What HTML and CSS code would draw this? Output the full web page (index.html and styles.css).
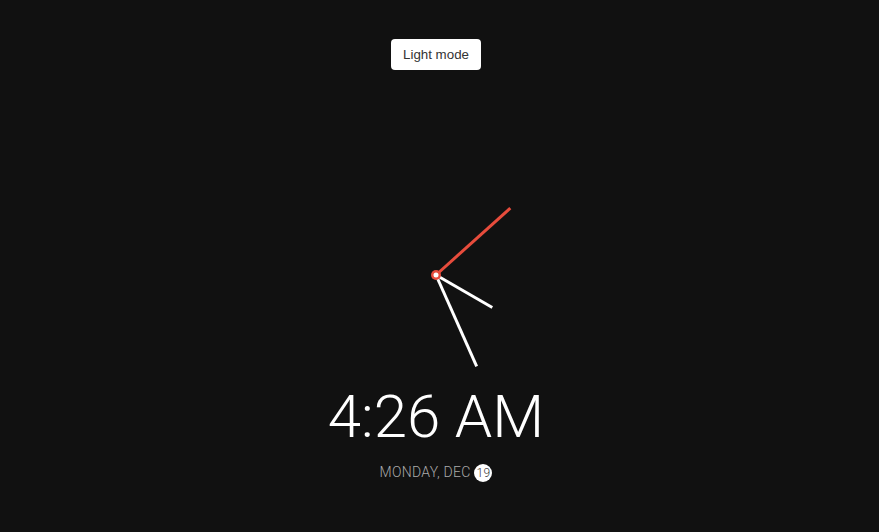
FILE: index.html
```html
<!DOCTYPE html>
<html lang="en" class="dark">
<head>
<meta charset="utf-8">
<title>Clock</title>
<link rel="stylesheet" href="styles.css">
</head>
<body>
<button class="toggle">Light mode</button>
<div class="clock-container">
  <div class="clock">
    <div class="needle hour"></div>
    <div class="needle minute"></div>
    <div class="needle second"></div>
    <div class="center-point"></div>
  </div>
  <div class="time">4:26 AM</div>
  <div class="date">Monday, Dec <span class="circle">19</span></div>
</div>
</body>
</html>
```
FILE: styles.css
```css
html {
  background-color: #111;
  color: #fff;
}
body {
  margin: 0;
  height: 532px;
  overflow: hidden;
  display: flex;
  flex-direction: column;
  align-items: center;
  padding: 39px 7px 0 0;
  box-sizing: border-box;
  font-family: Roboto, "Liberation Sans", sans-serif;
  font-weight: 300;
}
.toggle {
  background-color: #fff;
  color: #333;
  border: 0;
  border-radius: 4px;
  padding: 8px 12px;
  font-family: "Liberation Sans", Arial, sans-serif;
  font-weight: 400;
  font-size: 13.333px;
  line-height: 15px;
  cursor: pointer;
}
.clock-container {
  margin-top: 105px;
  display: flex;
  flex-direction: column;
  align-items: center;
}
.clock {
  position: relative;
  width: 200px;
  height: 200px;
}
.needle {
  background-color: #fff;
  position: absolute;
  top: 50%;
  left: 50%;
  width: 3px;
  height: 65px;
  transform-origin: bottom center;
}
.needle.hour {
  transform: translate(-50%, -100%) rotate(120deg);
}
.needle.minute {
  height: 100px;
  transform: translate(-50%, -100%) rotate(156deg);
}
.needle.second {
  height: 100px;
  background-color: #e74c3c;
  transform: translate(-50%, -100%) rotate(48deg);
}
.center-point {
  position: absolute;
  top: 50%;
  left: 50%;
  width: 10px;
  height: 10px;
  border-radius: 50%;
  background-color: #e74c3c;
  transform: translate(-50%, -50%);
}
.center-point::after {
  content: "";
  position: absolute;
  top: 50%;
  left: 50%;
  width: 5px;
  height: 5px;
  border-radius: 50%;
  background-color: #fff;
  transform: translate(-50%, -50%);
}
.time {
  margin-top: 7px;
  font-size: 60px;
  font-weight: 300;
  line-height: 70px;
}
.date {
  margin-top: 12px;
  color: #aaa;
  font-size: 14px;
  letter-spacing: 0.3px;
  text-transform: uppercase;
}
.circle {
  display: inline-flex;
  align-items: center;
  justify-content: center;
  width: 18px;
  height: 18px;
  border-radius: 50%;
  background-color: #fff;
  color: #333;
  font-size: 12px;
  line-height: 18px;
}
```
